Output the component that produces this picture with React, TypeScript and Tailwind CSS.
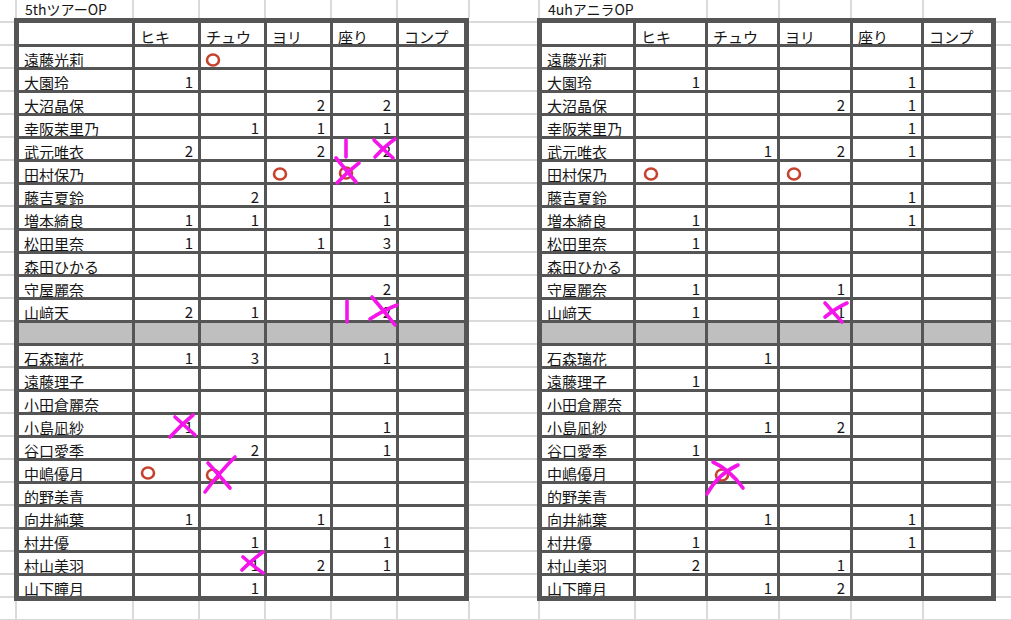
import React from "react";

const NAMES = [
  "遠藤光莉", "大園玲", "大沼晶保", "幸阪茉里乃", "武元唯衣", "田村保乃",
  "藤吉夏鈴", "増本綺良", "松田里奈", "森田ひかる", "守屋麗奈", "山﨑天",
  "",
  "石森璃花", "遠藤理子", "小田倉麗奈", "小島凪紗", "谷口愛季", "中嶋優月",
  "的野美青", "向井純葉", "村井優", "村山美羽", "山下瞳月",
];
const HEAD = ["ヒキ", "チュウ", "ヨリ", "座り", "コンプ"];
const E = ["", "", "", "", ""];

const LEFT: string[][] = [
  E,
  ["1", "", "", "", ""],
  ["", "", "2", "2", ""],
  ["", "1", "1", "1", ""],
  ["2", "", "2", "2", ""],
  E,
  ["", "2", "", "1", ""],
  ["1", "1", "", "1", ""],
  ["1", "", "1", "3", ""],
  E,
  ["", "", "", "2", ""],
  ["2", "1", "", "2", ""],
  E,
  ["1", "3", "", "1", ""],
  E,
  E,
  ["1", "", "", "1", ""],
  ["", "2", "", "1", ""],
  E,
  E,
  ["1", "", "1", "", ""],
  ["", "1", "", "1", ""],
  ["", "1", "2", "1", ""],
  ["", "1", "", "", ""],
];

const RIGHT: string[][] = [
  E,
  ["1", "", "", "1", ""],
  ["", "", "2", "1", ""],
  ["", "", "", "1", ""],
  ["", "1", "2", "1", ""],
  E,
  ["", "", "", "1", ""],
  ["1", "", "", "1", ""],
  ["1", "", "", "", ""],
  E,
  ["1", "", "1", "", ""],
  ["1", "", "1", "", ""],
  E,
  ["", "1", "", "", ""],
  ["1", "", "", "", ""],
  E,
  ["", "1", "2", "", ""],
  ["1", "", "", "", ""],
  E,
  E,
  ["", "1", "", "1", ""],
  ["1", "", "", "1", ""],
  ["2", "", "1", "", ""],
  ["", "1", "2", "", ""],
];

const GRAY_ROW = 12;

function Sheet({ cols, data }: { cols: string; data: string[][] }) {
  return (
    <div
      className={`grid ${cols} grid-rows-[21px_repeat(24,20px)] gap-[3px] border-[5px] border-[#555] bg-[#555] shrink-0`}
    >
      <div className="bg-white" />
      {HEAD.map((h) => (
        <div key={h} className="bg-white flex items-end pl-[5px] overflow-hidden whitespace-nowrap">
          {h}
        </div>
      ))}
      {NAMES.map((name, i) => {
        const gray = i === GRAY_ROW;
        const bg = gray ? "bg-[#bfbfbf]" : "bg-white";
        return (
          <React.Fragment key={i}>
            <div className={`${bg} flex items-end pl-[5px] overflow-hidden whitespace-nowrap`}>
              {name}
            </div>
            {data[i].map((v, j) => (
              <div key={j} className={`${bg} flex items-end justify-end pr-[5px] pb-[1px] overflow-hidden`}>
                {v}
              </div>
            ))}
          </React.Fragment>
        );
      })}
    </div>
  );
}

const RED = "#c5432e";
const PINK = "#f514ea";

function Marks() {
  const circles: [number, number][] = [
    [213, 60], [280, 174], [346, 173], [148, 473], [213, 475],
    [651, 174], [794, 174], [722, 475],
  ];
  const strokes: string[] = [
    // left 武元
    "M346 140 L346 157",
    "M374 140 Q384 150 393 158",
    "M375 157 Q385 146 395 139",
    // left 田村
    "M336 158 Q346 170 356 182",
    "M359 163 Q347 172 337 183",
    // left 山﨑天
    "M347 301 L347 322",
    "M372 297 Q384 311 395 325",
    "M370 319 Q384 310 397 305",
    // left 小島
    "M175 417 Q185 426 195 435",
    "M170 437 Q181 425 193 415",
    // left 中嶋
    "M205 492 Q219 473 235 457",
    "M208 463 Q220 476 230 488",
    // left 村山
    "M242 570 Q252 560 263 552",
    "M243 557 Q253 566 263 573",
    // right 山﨑天
    "M825 303 Q834 313 842 322",
    "M825 317 Q836 308 847 303",
    // right 中嶋
    "M707 494 Q718 474 738 465",
    "M713 462 Q730 470 743 488",
  ];
  return (
    <svg className="absolute left-0 top-0 pointer-events-none" width="1011" height="620" viewBox="0 0 1011 620">
      {circles.map(([x, y], i) => (
        <ellipse key={i} cx={x} cy={y} rx="6" ry="5.5" fill="none" stroke={RED} strokeWidth="2.6" />
      ))}
      {strokes.map((d, i) => (
        <path key={i} d={d} fill="none" stroke={PINK} strokeWidth="3.6" strokeLinecap="round" />
      ))}
    </svg>
  );
}

const line = "border-l-2 border-[#dadada] shrink-0";

export default function App() {
  return (
    <div className="relative w-[1011px] h-[620px] overflow-hidden bg-white bg-[linear-gradient(to_bottom,transparent_21px,#dadada_21px)] bg-[length:100%_23px] text-[15px] leading-[15px] text-[#161616] font-['Noto_Sans_CJK_JP',sans-serif]">
      {/* title row */}
      <div className="flex h-[18px] text-[14px]">
        <div className="w-[15px] shrink-0" />
        <div className={`${line} w-[117px] pl-[8px] pt-[2px] whitespace-nowrap`}>5thツアーOP</div>
        <div className={`${line} w-[66px]`} />
        <div className={`${line} w-[66px]`} />
        <div className={`${line} w-[66px]`} />
        <div className={`${line} w-[66px]`} />
        <div className={`${line} w-[72px]`} />
        <div className={`${line} w-[70px]`} />
        <div className={`${line} w-[168px] pl-[8px] pt-[2px] whitespace-nowrap`}>4uhアニラOP</div>
        <div className={`${line} w-[72px]`} />
        <div className={`${line} w-[72px]`} />
        <div className={`${line} w-[72px]`} />
        <div className={`${line} w-[89px]`} />
      </div>

      {/* tables */}
      <div className="flex">
        <div className="w-[14px] shrink-0" />
        <Sheet cols="grid-cols-[113px_63px_63px_63px_63px_65px]" data={LEFT} />
        <div className="w-[68px] shrink-0" />
        <Sheet cols="grid-cols-[91px_69px_69px_70px_68px_67px]" data={RIGHT} />
      </div>

      {/* rows below */}
      <div className="flex h-[19px]">
        <div className="w-[15px] shrink-0" />
        <div className={`${line} w-[117px]`} />
        <div className={`${line} w-[66px]`} />
        <div className={`${line} w-[66px]`} />
        <div className={`${line} w-[66px]`} />
        <div className={`${line} w-[66px]`} />
        <div className={`${line} w-[72px]`} />
        <div className={`${line} w-[70px]`} />
        <div className={`${line} w-[96px]`} />
        <div className={`${line} w-[72px]`} />
        <div className={`${line} w-[72px]`} />
        <div className={`${line} w-[72px]`} />
        <div className={`${line} w-[72px]`} />
        <div className={`${line} w-[17px]`} />
      </div>

      <Marks />
    </div>
  );
}
